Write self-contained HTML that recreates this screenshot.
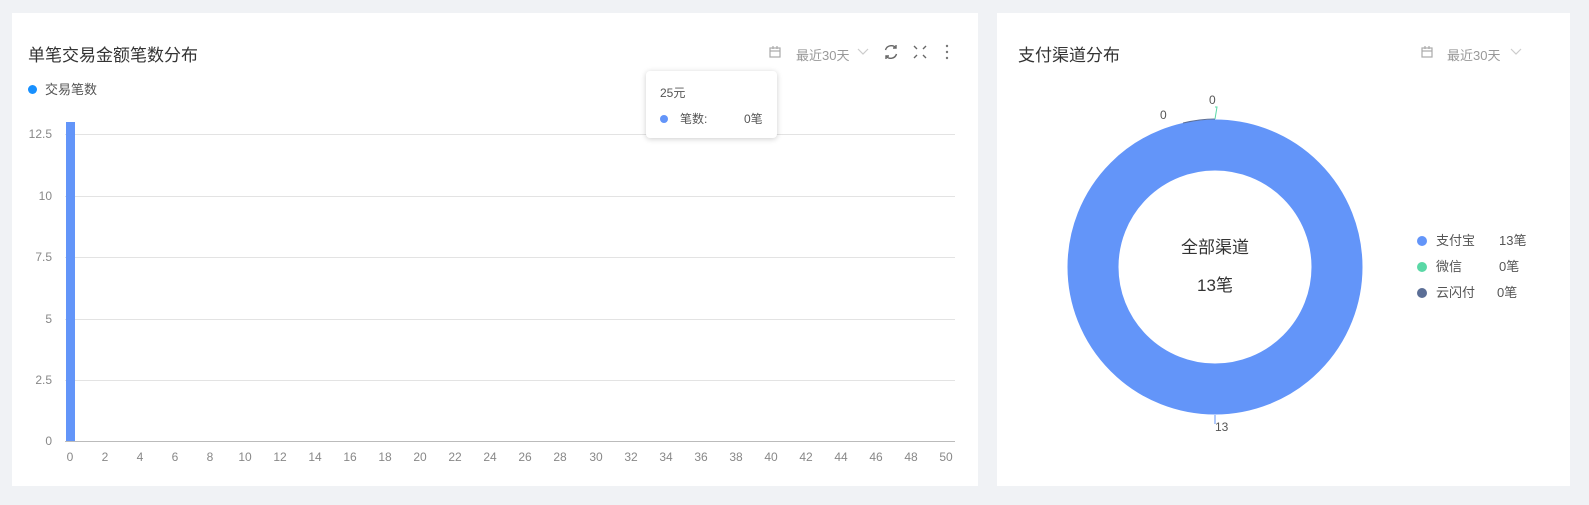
<!DOCTYPE html>
<html><head><meta charset="utf-8"><style>
body{margin:0;width:1589px;height:505px;background:#f0f2f5;font-family:"Liberation Sans","Noto Sans CJK SC",sans-serif;overflow:hidden;position:relative}
.card{position:absolute;background:#fff}
.t{position:absolute;white-space:nowrap}
</style></head><body>
<div class="card" style="left:12px;top:13px;width:966px;height:473px"></div>
<div class="card" style="left:997px;top:13px;width:573px;height:473px"></div>
<div class="t" style="left:28px;top:41px;font-size:17px;color:#333">单笔交易金额笔数分布</div>
<div class="t" style="left:1018px;top:41px;font-size:17px;color:#333">支付渠道分布</div>
<div class="t" style="left:28px;top:79px;font-size:13px;color:#555"><span style="display:inline-block;width:9px;height:9px;border-radius:50%;background:#1890ff;margin-right:8px"></span>交易笔数</div>
<div class="t" style="left:796px;top:45px;font-size:13px;color:#999">最近30天</div>
<div class="t" style="left:1447px;top:45px;font-size:13px;color:#999">最近30天</div>
<svg width="1589" height="505" style="position:absolute;left:0;top:0" font-family="Liberation Sans, Noto Sans CJK SC, sans-serif">
<!-- calendar icons -->
<g fill="none" stroke="#aaa" stroke-width="1.2">
<rect x="770" y="48" width="10" height="9"/><line x1="770" y1="51" x2="780" y2="51"/><line x1="773" y1="46" x2="773" y2="49"/><line x1="777" y1="46" x2="777" y2="49"/>
<rect x="1422" y="48" width="10" height="9"/><line x1="1422" y1="51" x2="1432" y2="51"/><line x1="1425" y1="46" x2="1425" y2="49"/><line x1="1429" y1="46" x2="1429" y2="49"/>
<polyline points="858,49 863,54 868,49" stroke="#ccc"/>
<polyline points="1511,49 1516,54 1521,49" stroke="#ccc"/>
</g>
<g fill="none" stroke="#666" stroke-width="1.4">
<path d="M885.5 50 A6 6 0 0 1 896 48"/><path d="M896.5 54 A6 6 0 0 1 886 56"/>
<polyline points="896,45 896,48 893,48"/><polyline points="886,59 886,56 889,56"/>
<path d="M914 46 l3 3 M926 46 l-3 3 M914 58 l3-3 M926 58 l-3-3"/>
</g>
<g fill="#777"><circle cx="947" cy="46" r="1.2"/><circle cx="947" cy="52" r="1.2"/><circle cx="947" cy="58" r="1.2"/></g>
<!-- grid -->
<g stroke="#e3e3e3" stroke-width="1">
<line x1="65" y1="134.5" x2="955" y2="134.5"/><line x1="65" y1="196.5" x2="955" y2="196.5"/><line x1="65" y1="257.5" x2="955" y2="257.5"/><line x1="65" y1="319.5" x2="955" y2="319.5"/><line x1="65" y1="380.5" x2="955" y2="380.5"/>
</g>
<line x1="65" y1="441.5" x2="955" y2="441.5" stroke="#bbb"/>
<rect x="66" y="122" width="9" height="319" fill="#6395f9"/>
<g font-size="12" fill="#888" text-anchor="end">
<text x="52" y="138">12.5</text><text x="52" y="200">10</text><text x="52" y="261">7.5</text><text x="52" y="323">5</text><text x="52" y="384">2.5</text><text x="52" y="445">0</text>
</g>
<g font-size="12" fill="#888" text-anchor="middle" id="xl">
<text x="70" y="461">0</text><text x="105" y="461">2</text><text x="140" y="461">4</text><text x="175" y="461">6</text><text x="210" y="461">8</text><text x="245" y="461">10</text><text x="280" y="461">12</text><text x="315" y="461">14</text><text x="350" y="461">16</text><text x="385" y="461">18</text><text x="420" y="461">20</text><text x="455" y="461">22</text><text x="490" y="461">24</text><text x="525" y="461">26</text><text x="560" y="461">28</text><text x="596" y="461">30</text><text x="631" y="461">32</text><text x="666" y="461">34</text><text x="701" y="461">36</text><text x="736" y="461">38</text><text x="771" y="461">40</text><text x="806" y="461">42</text><text x="841" y="461">44</text><text x="876" y="461">46</text><text x="911" y="461">48</text><text x="946" y="461">50</text>
</g>
<!-- donut -->
<circle cx="1215" cy="267" r="122" fill="none" stroke="#6395f9" stroke-width="51"/>
<path d="M1183 123 Q1200 119 1215 119" fill="none" stroke="#5b6e96"/>
<path d="M1215 119 L1217 107 L1215 107" fill="none" stroke="#5ad8a6"/>
<line x1="1215" y1="415" x2="1215" y2="424" stroke="#6395f9"/>
<g font-size="12" fill="#555"><text x="1160" y="119">0</text><text x="1209" y="104">0</text><text x="1215" y="431">13</text></g>
<text x="1215" y="253" font-size="17" fill="#333" text-anchor="middle">全部渠道</text>
<text x="1215" y="291" font-size="17" fill="#333" text-anchor="middle">13笔</text>
<circle cx="1422" cy="241" r="5" fill="#6395f9"/><circle cx="1422" cy="267" r="5" fill="#5ad8a6"/><circle cx="1422" cy="293" r="5" fill="#5b6e96"/>
<g font-size="13" fill="#555"><text x="1436" y="245">支付宝</text><text x="1436" y="271">微信</text><text x="1436" y="297">云闪付</text>
<text x="1499" y="245">13笔</text><text x="1499" y="271">0笔</text><text x="1497" y="297">0笔</text></g>
</svg>
<div style="position:absolute;left:646px;top:71px;width:131px;height:67px;background:#fff;border-radius:4px;box-shadow:0 1px 6px rgba(0,0,0,.2);font-size:12px;color:#555">
<div class="t" style="left:14px;top:13px">25元</div>
<div class="t" style="left:14px;top:39px"><span style="display:inline-block;width:8px;height:8px;border-radius:50%;background:#6395f9;margin-right:12px"></span>笔数:</div>
<div class="t" style="left:98px;top:39px">0笔</div>
</div>
</body></html>
